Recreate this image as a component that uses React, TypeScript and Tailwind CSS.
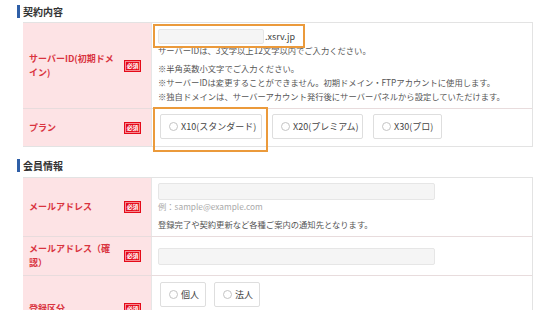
import React from "react";

const font = "font-['Noto_Sans_CJK_JP','Noto_Sans',sans-serif]";

function Badge() {
  return (
    <span className="flex h-[12px] w-[17px] shrink-0 items-center justify-center bg-[#e50a19] p-[1px]">
      <span className="flex h-full w-full items-center justify-center border border-[#f58a90] text-[6px] font-bold leading-none tracking-[-0.05em] text-white">
        必須
      </span>
    </span>
  );
}

function Heading({ children }: { children: React.ReactNode }) {
  return (
    <div className="ml-[17px] flex h-[13px] items-center border-l-[3px] border-[#2f5fa7] pl-[3px] text-[10px] font-bold leading-none text-[#333]">
      {children}
    </div>
  );
}

function Label({ children }: { children: React.ReactNode }) {
  return (
    <div className="flex w-[128px] shrink-0 items-center justify-between bg-[#fde3e5] pl-[6px] pr-[10px]">
      <div className="w-[85.5px] text-[9px] font-bold leading-[14px] text-[#d9343f]">
        {children}
      </div>
      <Badge />
    </div>
  );
}

function Radio({ label, width }: { label: string; width: string }) {
  return (
    <div
      className={`flex h-[25px] ${width} items-center gap-[3px] rounded-[2px] border border-[#dedede] bg-white pl-[8px] text-[9px] text-[#444]`}
    >
      <span className="h-[9px] w-[9px] rounded-full border border-[#c4c4c4] bg-white" />
      <span className="leading-none">{label}</span>
    </div>
  );
}

function Input({ width, height }: { width: string; height: string }) {
  return (
    <div
      className={`${width} ${height} rounded-[2px] border border-[#e6e6e6] bg-[#f5f5f5]`}
    />
  );
}

export default function App() {
  return (
    <div
      className={`relative h-[310px] w-[550px] overflow-hidden bg-white ${font}`}
    >
      <div className="pt-[5px]">
        <Heading>契約内容</Heading>
      </div>

      <div className="ml-[23px] mt-[4px] w-[510px] border-y border-r border-[#e3e3e3]">
        <div className="flex border-b border-[#e8dcdd]">
          <Label>サーバーID(初期ドメイン)</Label>
          <div className="flex-1 border-l border-[#e6e6e6] px-[6px] pb-[5px] pt-[6px] text-[8.3px] text-[#555]">
            <div className="flex items-center gap-[1px]">
              <Input width="w-[106px]" height="h-[15px]" />
              <span className="text-[9px] text-[#444]">.xsrv.jp</span>
            </div>
            <p className="leading-[12px]">
              サーバーIDは、3文字以上12文字以内でご入力ください。
            </p>
            <div className="mt-[5px] leading-[14px]">
              <p>※半角英数小文字でご入力ください。</p>
              <p>
                ※サーバーIDは変更することができません。初期ドメイン・FTPアカウントに使用します。
              </p>
              <p>
                ※独自ドメインは、サーバーアカウント発行後にサーバーパネルから設定していただけます。
              </p>
            </div>
          </div>
        </div>
        <div className="flex">
          <Label>プラン</Label>
          <div className="flex flex-1 gap-[10px] border-l border-[#e6e6e6] px-[8px] pb-[7px] pt-[5px]">
            <Radio label="X10(スタンダード)" width="w-[102px]" />
            <Radio label="X20(プレミアム)" width="w-[91px]" />
            <Radio label="X30(プロ)" width="w-[69px]" />
          </div>
        </div>
      </div>

      <div className="mt-[12px]">
        <Heading>会員情報</Heading>
      </div>

      <div className="ml-[23px] mt-[5px] w-[510px] border-t border-r border-[#e3e3e3]">
        <div className="flex border-b border-[#e8dcdd]">
          <Label>メールアドレス</Label>
          <div className="flex-1 border-l border-[#e6e6e6] px-[6px] pb-[6px] pt-[5px] text-[8.3px] text-[#555]">
            <Input width="w-[277px]" height="h-[17px]" />
            <p className="leading-[12px] text-[#aaa]">例：sample@example.com</p>
            <p className="mt-[6px] leading-[12px]">
              登録完了や契約更新など各種ご案内の通知先となります。
            </p>
          </div>
        </div>
        <div className="flex h-[39px] border-b border-[#e8dcdd]">
          <Label>メールアドレス（確認）</Label>
          <div className="flex flex-1 items-center border-l border-[#e6e6e6] px-[6px]">
            <Input width="w-[277px]" height="h-[17px]" />
          </div>
        </div>
        <div className="flex h-[66px]">
          <Label>登録区分</Label>
          <div className="flex flex-1 gap-[8px] border-l border-[#e6e6e6] px-[8px] pt-[6px]">
            <Radio label="個人" width="w-[46px]" />
            <Radio label="法人" width="w-[46px]" />
          </div>
        </div>
      </div>

      <div className="absolute left-[153px] top-[24px] h-[24px] w-[152px] border-2 border-[#eb9a3b]" />
      <div className="absolute left-[153px] top-[107px] h-[45px] w-[115px] border-2 border-[#eb9a3b]" />
    </div>
  );
}
